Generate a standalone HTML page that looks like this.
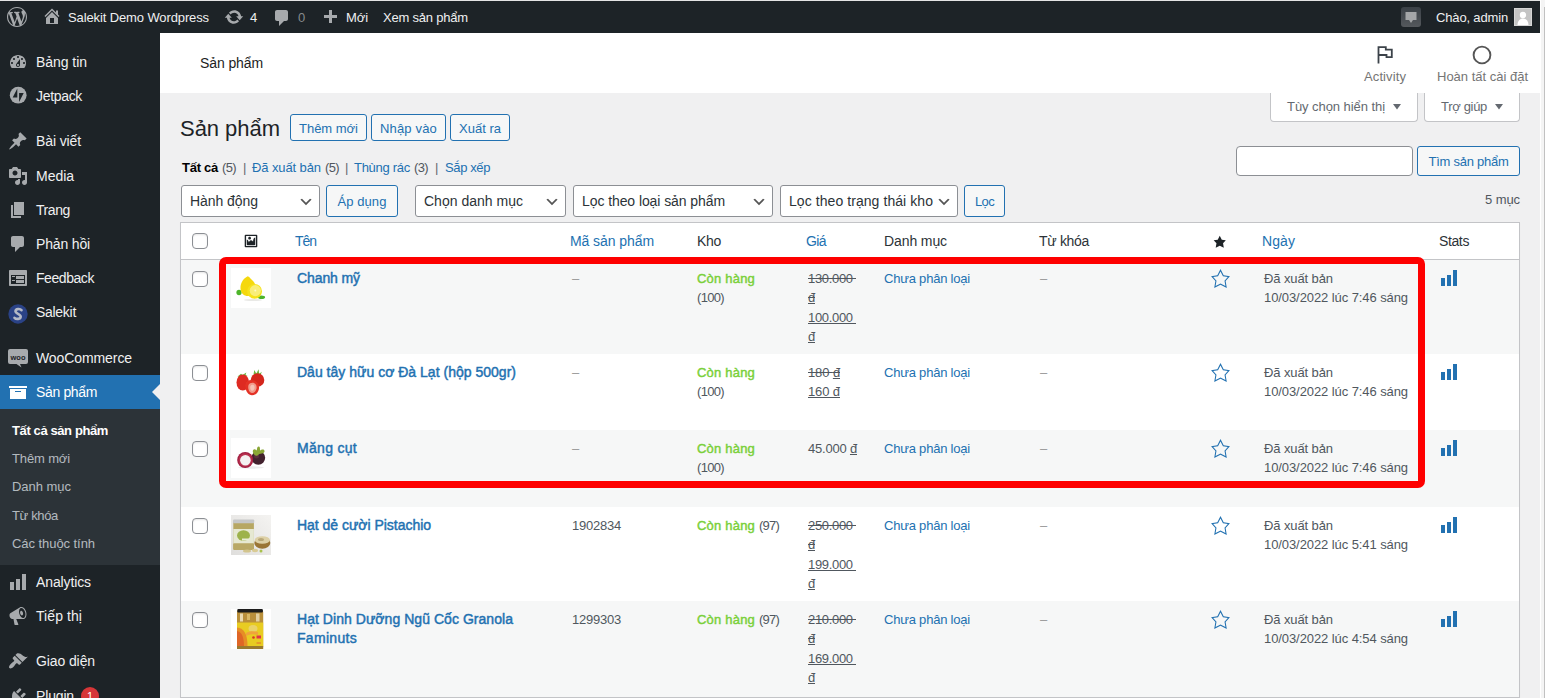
<!DOCTYPE html>
<html lang="vi"><head><meta charset="utf-8"><title>Sản phẩm ‹ Salekit Demo Wordpress — WordPress</title>
<style>
*{box-sizing:border-box;margin:0;padding:0}
html,body{width:1545px;height:698px;overflow:hidden;background:#f0f0f1}
body{font-family:"Liberation Sans",sans-serif;font-size:13px;line-height:1.4;color:#3c434a;position:relative}
.abs{position:absolute}
.t{position:absolute;white-space:nowrap;display:block;margin-top:1px}
.sel .t{margin-top:0}
.mi>.t{margin-top:0}
.tab .t{margin-top:0}
svg{display:block}
#topline{position:absolute;left:0;top:0;width:1545px;height:1px;background:#e4e4e4}
#scroll{position:absolute;left:1540px;top:0;width:5px;height:698px;background:#f4f4f4;border-left:1px solid #fff}
#scroll i{position:absolute;left:3px;top:7px;width:1px;height:691px;background:#c1c1c1}
#bar{position:absolute;left:0;top:1px;width:1540px;height:32px;background:#1d2327;color:#f0f0f1;font-size:13px;line-height:32px}
#menu{position:absolute;left:0;top:33px;width:160px;height:665px;background:#1d2327;overflow:hidden}
.mi{position:absolute;left:0;width:160px;height:34.2px;color:#f0f0f1;font-size:14px;line-height:18.2px}
.mi svg{position:absolute;left:8px;top:7px}
.mi .t{left:36px;top:8px}
.mi.cur{background:#2271b1;color:#fff}
.mi.cur:after{content:"";position:absolute;right:0;top:9px;border:8px solid transparent;border-right-color:#f0f0f1}
#sub{position:absolute;left:0;top:376px;width:160px;height:156px;background:#2c3338}
#sub .t{left:12px;color:rgba(240,246,252,.7);font-size:13px;line-height:18.2px}
#sub .t.b{color:#fff;font-weight:bold}
#whead{position:absolute;left:160px;top:33px;width:1380px;height:60px;background:#fff}
.tab{position:absolute;top:93px;height:29px;background:#fff;border:1px solid #c3c4c7;border-top:none;border-radius:0 0 4px 4px;color:#646970;font-size:13px;line-height:28px}
.btn{position:absolute;border:1px solid #2271b1;border-radius:3px;background:#f6f7f7;color:#2271b1;font-size:13px}
.sel{position:absolute;top:185px;height:32px;border:1px solid #8c8f94;border-radius:3px;background:#fff;color:#2c3338;font-size:14px;line-height:30px}
.sel svg{position:absolute;right:5px;top:8px}
#tbl{position:absolute;left:180px;top:222px;width:1340px;height:476px;border:1px solid #c3c4c7;background:#fff;box-shadow:0 1px 1px rgba(0,0,0,.04)}
#thead{position:absolute;left:0;top:0;width:1338px;height:37px;border-bottom:1px solid #c3c4c7;font-size:14px;line-height:19.6px;color:#2c3338}
#thead .t{top:8px}
.row{position:absolute;left:0;width:1338px;font-size:13px;line-height:19.5px;color:#50575e}
.row.alt{background:#f6f7f7}
.row .t{top:8px}
.cb{position:absolute;left:11px;width:16px;height:16px;border:1px solid #8c8f94;border-radius:4px;background:#fff;box-shadow:inset 0 1px 2px rgba(0,0,0,.1)}
a{color:#2271b1;text-decoration:none}
.lnk{color:#2271b1}
.name{font-size:14px;font-weight:normal;-webkit-text-stroke:.45px #2271b1;color:#2271b1}
.stock{color:#7ad03a;font-weight:normal;-webkit-text-stroke:.45px #7ad03a}
del{color:#50575e}
.u{text-decoration:underline}
#red{position:absolute;left:219px;top:257px;width:1206px;height:231px;border:7px solid #fe0000;border-radius:7px}
</style></head>
<body>
<div id="topline"></div>
<div id="scroll"><i></i></div>
<div id="bar">
<svg viewBox="0 0 20 20" width="20" height="20" style="position:absolute;left:7px;top:6px"><path fill="#a7aaad" d="M20 10c0-5.51-4.49-10-10-10C4.48 0 0 4.49 0 10c0 5.52 4.48 10 10 10 5.51 0 10-4.48 10-10zM7.78 15.37L4.37 6.22c.55-.02 1.17-.08 1.17-.08.5-.06.44-1.13-.06-1.11 0 0-1.45.11-2.37.11-.18 0-.37 0-.58-.01C4.12 2.69 6.87 1.11 10 1.11c2.33 0 4.45.87 6.05 2.34-.68-.11-1.65.39-1.65 1.58 0 .74.45 1.36.9 2.1.35.61.55 1.36.55 2.46 0 1.49-1.4 5-1.4 5l-3.03-8.37c.54-.02.82-.17.82-.17.5-.05.44-1.25-.06-1.22 0 0-1.44.12-2.38.12-.87 0-2.33-.12-2.33-.12-.5-.03-.56 1.2-.06 1.22l.92.08 1.26 3.41zM17.41 10c.24-.64.74-1.87.43-4.25.7 1.29 1.05 2.71 1.05 4.25 0 3.29-1.73 6.24-4.4 7.78.97-2.59 1.94-5.2 2.92-7.78zM6.1 18.09C3.12 16.65 1.11 13.53 1.11 10c0-1.3.23-2.48.72-3.59C3.25 10.3 4.67 14.2 6.1 18.09zm4.03-6.63l2.58 6.98c-.86.29-1.76.45-2.71.45-.79 0-1.57-.11-2.29-.33.81-2.38 1.62-4.74 2.42-7.1z"/></svg>
<svg viewBox="0 0 20 20" width="20" height="20" style="position:absolute;left:42px;top:5px"><path fill="#a7aaad" d="M16 8.5l1.53 1.53-1.06 1.06L10 4.62l-6.47 6.47-1.06-1.06L10 2.5l4 4v-2h2v4zm-6-2.46l6 5.99V18H4v-5.97zM12 17v-5H8v5h4z"/></svg>
<span class="t " style="left:68px;top:0px;letter-spacing:-0.116px;">Salekit Demo Wordpress</span>
<svg viewBox="0 0 20 20" width="20" height="20" style="position:absolute;left:224px;top:6px"><path fill="#a7aaad" d="M10.2 3.28c3.53 0 6.43 2.61 6.92 6h2.08l-3.5 4-3.5-4h2.32c-.45-1.97-2.21-3.45-4.32-3.45-1.45 0-2.73.71-3.54 1.78L4.95 5.66C6.23 4.2 8.11 3.28 10.2 3.28zm-.4 13.44c-3.52 0-6.43-2.61-6.92-6H.8l3.5-4c1.17 1.33 2.33 2.67 3.5 4H5.48c.45 1.97 2.21 3.45 4.32 3.45 1.45 0 2.73-.71 3.54-1.78l1.71 1.95c-1.28 1.46-3.15 2.38-5.25 2.38z"/></svg>
<span class="t " style="left:250px;top:0px;letter-spacing:-0.234px;">4</span>
<svg viewBox="0 0 20 20" width="20" height="20" style="position:absolute;left:272px;top:7px"><path fill="#a7aaad" d="M5 2h9c1.1 0 2 .9 2 2v7c0 1.1-.9 2-2 2h-2l-5 5v-5H5c-1.1 0-2-.9-2-2V4c0-1.1.9-2 2-2z"/></svg>
<span class="t " style="left:298px;top:0px;letter-spacing:-0.234px;color:#878a8c;">0</span>
<svg viewBox="0 0 20 20" width="20" height="20" style="position:absolute;left:320px;top:7px"><path fill="#a7aaad" d="M17 7v3h-5v5H9v-5H4V7h5V2h3v5h5z"/></svg>
<span class="t " style="left:346px;top:0px;letter-spacing:-0.083px;">Mới</span>
<span class="t " style="left:383px;top:0px;letter-spacing:-0.203px;">Xem sản phẩm</span>
<div class="abs" style="left:1401px;top:6px;width:20px;height:20px;background:linear-gradient(#3a4046,#55595d);border-radius:3px"></div>
<svg class="abs" style="left:1405px;top:11px" width="12" height="12" viewBox="0 0 12 12"><path fill="#a4a6a8" d="M.500 0h11v8H8L6 11 4 8H.500z"/></svg>
<span class="t " style="left:1436px;top:0px;letter-spacing:-0.156px;">Chào, admin</span>
<div class="abs" style="left:1514px;top:7px;width:18px;height:18px;background:#c4c4c4;border:1px solid #d6d6d6;overflow:hidden"><svg width="16" height="16" viewBox="0 0 16 16"><circle cx="8" cy="6" r="3.200" fill="#fff"/><path fill="#fff" d="M2.500 16c0-4 2.500-6.500 5.500-6.500s5.500 2.500 5.500 6.500z"/></svg></div>
</div>
<div id="menu">
<div class="mi" style="top:12.0px"><svg viewBox="0 0 20 20" width="20" height="20" style=""><path fill="#a7aaad" d="M3.76 16h12.48c1.1-1.37 1.76-3.11 1.76-5 0-4.42-3.58-8-8-8s-8 3.58-8 8c0 1.89.66 3.63 1.76 5zM10 4c.55 0 1 .45 1 1s-.45 1-1 1-1-.45-1-1 .45-1 1-1zM6 6c.55 0 1 .45 1 1s-.45 1-1 1-1-.45-1-1 .45-1 1-1zm8 0c.55 0 1 .45 1 1s-.45 1-1 1-1-.45-1-1 .45-1 1-1zm-5.37 5.55L12 7v6c0 1.1-.9 2-2 2s-2-.9-2-2c0-.57.24-1.08.63-1.45zM4 10c.55 0 1 .45 1 1s-.45 1-1 1-1-.45-1-1 .45-1 1-1zm12 0c.55 0 1 .45 1 1s-.45 1-1 1-1-.45-1-1 .45-1 1-1zm-5 3c0-.55-.45-1-1-1s-1 .45-1 1 .45 1 1 1 1-.45 1-1z"/></svg><span class="t " style="letter-spacing:-0.047px;">Bảng tin</span></div>
<div class="mi" style="top:46.2px"><svg width="20" height="20" viewBox="0 0 20 20"><circle cx="10.200" cy="9.200" r="8.400" fill="#a7aaad"/><path fill="#1d2327" d="M9.300 2.400v9H4.700zM11.100 16v-9h4.600z"/></svg><span class="t " style="letter-spacing:-0.321px;">Jetpack</span></div>
<div class="mi" style="top:91.4px"><svg viewBox="0 0 20 20" width="20" height="20" style=""><path fill="#a7aaad" d="M10.44 3.02l1.82-1.82 6.36 6.35-1.83 1.82c-1.05-.68-2.48-.57-3.41.36l-.75.75c-.92.93-1.04 2.35-.35 3.41l-1.83 1.82-2.41-2.41-2.8 2.79c-.42.42-3.38 2.71-3.8 2.29s1.86-3.39 2.28-3.81l2.79-2.79L4.1 9.36l1.83-1.82c1.05.69 2.48.57 3.4-.36l.75-.75c.93-.92 1.05-2.35.36-3.41z"/></svg><span class="t " style="letter-spacing:-0.115px;">Bài viết</span></div>
<div class="mi" style="top:125.6px"><svg viewBox="0 0 20 20" width="20" height="20" style=""><path fill="#a7aaad" d="M13 11V4c0-.55-.45-1-1-1h-1.67L9 1H5L3.67 3H2c-.55 0-1 .45-1 1v7c0 .55.45 1 1 1h10c.55 0 1-.45 1-1zM7 4.5c1.38 0 2.5 1.12 2.5 2.5S8.38 9.5 7 9.5 4.5 8.38 4.5 7 5.62 4.5 7 4.5zM14 6h5v10.5c0 1.38-1.12 2.5-2.5 2.5S14 17.88 14 16.5s1.12-2.5 2.5-2.5c.17 0 .34.02.5.05V9h-3V6zm-4 8.05V13h2v3.5c0 1.38-1.12 2.5-2.5 2.5S7 17.880 7 16.5 8.12 14 9.5 14c.17 0 .34.02.5.05z"/></svg><span class="t " style="letter-spacing:-0.028px;">Media</span></div>
<div class="mi" style="top:159.8px"><svg viewBox="0 0 20 20" width="20" height="20" style=""><path fill="#a7aaad" d="M6 15V2h10v13H6zm-1 1h8v2H3V5h2v11z"/></svg><span class="t " style="letter-spacing:-0.412px;">Trang</span></div>
<div class="mi" style="top:194.0px"><svg viewBox="0 0 20 20" width="20" height="20" style=""><path fill="#a7aaad" d="M5 2h9c1.1 0 2 .9 2 2v7c0 1.1-.9 2-2 2h-2l-5 5v-5H5c-1.1 0-2-.9-2-2V4c0-1.1.9-2 2-2z"/></svg><span class="t " style="letter-spacing:-0.160px;">Phản hồi</span></div>
<div class="mi" style="top:228.2px"><svg viewBox="0 0 20 20" width="20" height="20" style=""><path fill="#a7aaad" d="M2 2h16c.55 0 1 .45 1 1v14c0 .55-.45 1-1 1H2c-.55 0-1-.45-1-1V3c0-.55.45-1 1-1zm15 14V7H3v9h14zM4 8v1h3V8H4zm4 0v3h8V8H8zm-4 4v1h3v-1H4zm4 0v3h8v-3H8z"/></svg><span class="t " style="letter-spacing:-0.436px;">Feedback</span></div>
<div class="mi" style="top:262.4px"><svg width="20" height="20" viewBox="0 0 20 20" style="margin-top:1.500px"><circle cx="10" cy="10" r="9.700" fill="#2a4286"/><path fill="none" stroke="#b4b9c6" stroke-width="2.600" stroke-linecap="round" d="M13.500 6.200c-1.500-1.700-5.800-1.600-6 1 -.2 2.600 5.300 2.600 5.200 5.400-.1 2.700-4.600 2.900-6.200 1.200"/></svg><span class="t " style="letter-spacing:-0.290px;">Salekit</span></div>
<div class="mi" style="top:307.6px"><svg width="20" height="20" viewBox="0 0 20 20"><path fill="#a7aaad" d="M2 1h16a2 2 0 0 1 2 2v11a2 2 0 0 1-2 2h-6l1.500 3.500L8.500 16H2a2 2 0 0 1-2-2V3a2 2 0 0 1 2-2z"/><text x="10" y="11.500" font-family="Liberation Sans,sans-serif" font-size="7.500" font-weight="bold" fill="#1d2327" text-anchor="middle">woo</text></svg><span class="t " style="letter-spacing:-0.091px;">WooCommerce</span></div>
<div class="mi cur" style="top:341.8px"><svg viewBox="0 0 20 20" width="20" height="20" style=""><path fill="#fff" d="M19 4v2H1V4h18zM2 7h16v10H2V7zm11 3V9H7v1h6z"/></svg><span class="t " style="letter-spacing:-0.354px;">Sản phẩm</span></div>
<div class="mi" style="top:532.0px"><svg viewBox="0 0 20 20" width="20" height="20" style=""><path fill="#a7aaad" d="M18 18V2h-4v16h4zm-6 0V7H8v11h4zm-6 0v-8H2v8h4z"/></svg><span class="t " style="letter-spacing:-0.115px;">Analytics</span></div>
<div class="mi" style="top:566.2px"><svg viewBox="0 0 20 20" width="20" height="20" style=""><path fill="#a7aaad" d="M18.15 5.94c.46 1.62.38 3.22-.02 4.48-.42 1.28-1.26 2.18-2.3 2.48-.16.06-.26.06-.4.06-.06.02-.12.02-.18.02-.06.02-.14.02-.22.02h-6.8l2.22 5.5c.02.14-.06.26-.14.34-.08.1-.24.16-.34.16H6.95c-.1 0-.26-.06-.34-.16-.08-.08-.16-.2-.14-.34l-1-5.5H4.25l-.02-.02c-.5.06-1.08-.18-1.54-.62s-.88-1.08-1.06-1.88c-.24-.8-.2-1.56-.02-2.2.18-.62.58-1.08 1.06-1.3l.02-.02 9-5.4c.1-.06.18-.1.24-.16.06-.04.14-.08.24-.12.16-.08.28-.12.5-.18 1.04-.3 2.24.1 3.22.98s1.84 2.24 2.26 3.86zm-2.58 5.98h-.02c.4-.1.74-.34 1.04-.7.58-.7.86-1.76.86-3.04 0-.64-.1-1.3-.28-1.98-.34-1.36-1.02-2.5-1.78-3.24s-1.68-1.1-2.46-.88c-.82.22-1.4.96-1.7 2-.32 1.04-.28 2.36.06 3.72.38 1.36 1 2.5 1.8 3.24.78.74 1.62 1.1 2.48.88zm-2.54-7.08c.22-.04.42-.02.62.04.38.16.76.48 1.02 1s.42 1.2.42 1.78c0 .3-.04.56-.12.8-.18.48-.44.84-.86.94-.34.1-.8-.06-1.14-.4s-.64-.86-.78-1.5c-.18-.62-.12-1.24.02-1.72s.48-.84.82-.94z"/></svg><span class="t " style="letter-spacing:0.076px;">Tiếp thị</span></div>
<div class="mi" style="top:611.4px"><svg viewBox="0 0 20 20" width="20" height="20" style=""><path fill="#a7aaad" d="M14.48 11.06L7.41 3.99l1.5-1.5c.5-.56 2.3-.47 3.51.32 1.21.8 1.43 1.28 2.91 2.1 1.18.64 2.45 1.26 4.45.85zm-.71.71L6.7 4.7 4.93 6.47c-.39.39-.39 1.02 0 1.41l1.06 1.06c.39.39.39 1.03 0 1.42-.6.6-1.43 1.11-2.21 1.69-.35.26-.7.53-1.01.84C1.43 14.23.4 16.08 1.4 17.07c.99 1 2.84-.03 4.18-1.36.31-.31.58-.66.85-1.02.57-.78 1.08-1.61 1.69-2.21.39-.39 1.02-.39 1.41 0l1.06 1.06c.39.39 1.02.39 1.41 0z"/></svg><span class="t " style="letter-spacing:-0.104px;">Giao diện</span></div>
<div class="mi" style="top:645.6px"><svg viewBox="0 0 20 20" width="20" height="20" style=""><path fill="#a7aaad" d="M13.11 4.36L9.87 7.6 8 5.73l3.24-3.24c.35-.34 1.05-.2 1.56.32.52.51.66 1.21.31 1.55zm-8 1.77l.91-1.12 9.01 9.01-1.19.84c-.71.71-2.63 1.16-3.82 1.16H6.14L4.9 17.26c-.59.59-1.54.59-2.12 0-.59-.58-.59-1.53 0-2.12l1.24-1.24v-3.88c0-1.13.4-3.19 1.09-3.89zm7.26 3.970l3.24-3.24c.34-.35 1.04-.21 1.55.31.52.51.66 1.21.31 1.55l-3.24 3.25z"/></svg><span class="t " style="letter-spacing:-0.154px;">Plugin</span><span class="abs" style="left:81px;top:8px;width:18px;height:18px;border-radius:9px;background:#d63638;color:#fff;font-size:11px;line-height:18px;text-align:center">1</span></div>
<div id="sub" style="top:376.0px">
<span class="t b" style="top:12.0px;letter-spacing:-0.392px;">Tất cả sản phẩm</span>
<span class="t " style="top:40.2px;letter-spacing:-0.137px;">Thêm mới</span>
<span class="t " style="top:68.4px;letter-spacing:-0.031px;">Danh mục</span>
<span class="t " style="top:96.6px;letter-spacing:-0.350px;">Từ khóa</span>
<span class="t " style="top:124.8px;letter-spacing:-0.059px;">Các thuộc tính</span>
</div>
</div>
<div id="whead">
<span class="t " style="left:40px;top:19px;letter-spacing:-0.104px;font-size:14px;line-height:20px;color:#1e1e1e;">Sản phẩm</span>
<svg class="abs" style="left:1216px;top:12px" width="18" height="20" viewBox="0 0 18 20"><path fill="none" stroke="#3c434a" stroke-width="1.800" d="M2.500 18.600V2.200H9.800V4.600H15.800V12.100H10.500V10H2.500"/></svg>
<span class="t " style="left:1204px;top:34px;letter-spacing:0.104px;font-size:13px;line-height:18px;color:#757575;">Activity</span>
<svg class="abs" style="left:1312px;top:12px" width="20" height="20" viewBox="0 0 20 20"><circle cx="10" cy="10" r="8.400" fill="none" stroke="#555" stroke-width="1.900"/></svg>
<span class="t " style="left:1277px;top:34px;letter-spacing:-0.004px;font-size:13px;line-height:18px;color:#757575;">Hoàn tất cài đặt</span>
</div>
<div class="tab" style="left:1270px;width:148px"><span class="t " style="left:16px;top:0px;letter-spacing:-0.060px;">Tùy chọn hiển thị</span><svg class="abs" style="left:122px;top:11px" width="8" height="5.5" viewBox="0 0 9 7" preserveAspectRatio="none"><path fill="#646970" d="M0 0h9L4.500 7z"/></svg></div>
<div class="tab" style="left:1424px;width:96px"><span class="t " style="left:16px;top:0px;letter-spacing:-0.314px;">Trợ giúp</span><svg class="abs" style="left:70px;top:11px" width="8" height="5.5" viewBox="0 0 9 7" preserveAspectRatio="none"><path fill="#646970" d="M0 0h9L4.500 7z"/></svg></div>
<span class="t " style="left:180px;top:113px;letter-spacing:-0.037px;font-size:22px;line-height:30px;color:#1d2327;">Sản phẩm</span>
<div class="btn" style="left:290px;top:114px;width:77px;height:27px;line-height:25px;font-size:13px"><span class="t " style="left:8.0px;top:0px;letter-spacing:-0.012px;">Thêm mới</span></div>
<div class="btn" style="left:371px;top:114px;width:75px;height:27px;line-height:25px;font-size:13px"><span class="t " style="left:8.0px;top:0px;letter-spacing:0.168px;">Nhập vào</span></div>
<div class="btn" style="left:450px;top:114px;width:60px;height:27px;line-height:25px;font-size:13px"><span class="t " style="left:8.0px;top:0px;letter-spacing:0.011px;">Xuất ra</span></div>
<div class="abs" style="left:182px;top:158px;font-size:13px;line-height:18px;height:18px;color:#646970">
<span class="t " style="left:0px;top:0px;letter-spacing:-0.263px;color:#000;font-weight:bold;">Tất cả</span>
<span class="t " style="left:40px;top:0px;letter-spacing:-0.630px;color:#50575e;">(5)</span>
<span class="t " style="left:61px;top:0px;letter-spacing:-1.391px;">|</span>
<span class="t lnk" style="left:70px;top:0px;letter-spacing:-0.101px;">Đã xuất bản</span>
<span class="t " style="left:143px;top:0px;letter-spacing:-0.630px;color:#50575e;">(5)</span>
<span class="t " style="left:163px;top:0px;letter-spacing:-1.391px;">|</span>
<span class="t lnk" style="left:172px;top:0px;letter-spacing:-0.283px;">Thùng rác</span>
<span class="t " style="left:232px;top:0px;letter-spacing:-0.630px;color:#50575e;">(3)</span>
<span class="t " style="left:253px;top:0px;letter-spacing:-1.391px;">|</span>
<span class="t lnk" style="left:263px;top:0px;letter-spacing:-0.386px;">Sắp xếp</span>
</div>
<div class="abs" style="left:1236px;top:146px;width:177px;height:30px;border:1px solid #8c8f94;border-radius:4px;background:#fff"></div>
<div class="btn" style="left:1417px;top:146px;width:103px;height:30px;line-height:28px;font-size:13px"><span class="t " style="left:10.5px;top:0px;letter-spacing:-0.258px;">Tìm sản phẩm</span></div>
<div class="sel" style="left:181px;width:139px"><span class="t " style="left:8px;top:0px;letter-spacing:-0.057px;">Hành động</span><svg width="16" height="16" viewBox="0 0 20 20"><path d="M5 6l5 5 5-5 2 1-7 7-7-7 2-1z" fill="#555"/></svg></div>
<div class="btn" style="left:326px;top:185px;width:72px;height:32px;line-height:30px;font-size:13px"><span class="t " style="left:10.5px;top:0px;letter-spacing:0.080px;">Áp dụng</span></div>
<div class="sel" style="left:415px;width:151px"><span class="t " style="left:8px;top:0px;letter-spacing:0.012px;">Chọn danh mục</span><svg width="16" height="16" viewBox="0 0 20 20"><path d="M5 6l5 5 5-5 2 1-7 7-7-7 2-1z" fill="#555"/></svg></div>
<div class="sel" style="left:573px;width:200px"><span class="t " style="left:8px;top:0px;letter-spacing:-0.080px;">Lọc theo loại sản phẩm</span><svg width="16" height="16" viewBox="0 0 20 20"><path d="M5 6l5 5 5-5 2 1-7 7-7-7 2-1z" fill="#555"/></svg></div>
<div class="sel" style="left:780px;width:178px"><span class="t " style="left:8px;top:0px;letter-spacing:0.068px;">Lọc theo trạng thái kho</span><svg width="16" height="16" viewBox="0 0 20 20"><path d="M5 6l5 5 5-5 2 1-7 7-7-7 2-1z" fill="#555"/></svg></div>
<div class="btn" style="left:964px;top:185px;width:41px;height:32px;line-height:30px;font-size:13px"><span class="t " style="left:10.0px;top:0px;letter-spacing:-0.656px;">Lọc</span></div>
<span class="t " style="left:1485px;top:190px;letter-spacing:-0.081px;font-size:13px;line-height:18px;color:#50575e;">5 mục</span>
<div id="tbl">
<div id="thead">
<span class="cb" style="top:10px"></span>
<svg viewBox="0 0 20 20" width="14" height="14" style="position:absolute;left:63px;top:11px"><path fill="#1d2327" d="M2.250 1h15.5c.69 0 1.25.56 1.25 1.25v15.5c0 .69-.56 1.25-1.25 1.25H2.25C1.56 19 1 18.44 1 17.75V2.25C1 1.56 1.56 1 2.25 1zM17 17V3H3v14h14zM10 6c0-1.100-.9-2-2-2s-2 .9-2 2 .9 2 2 2 2-.9 2-2zm3 5s0-6 3-6v10c0 .55-.45 1-1 1H5c-.55 0-1-.45-1-1V8c2 0 3 4 3 4s1-3 3-3 3 2 3 2z"/></svg>
<span class="t lnk" style="left:114px;letter-spacing:-1.042px;">Tên</span>
<span class="t lnk" style="left:389px;letter-spacing:-0.075px;">Mã sản phẩm</span>
<span class="t " style="left:516px;letter-spacing:-0.307px;">Kho</span>
<span class="t lnk" style="left:625px;letter-spacing:-0.599px;">Giá</span>
<span class="t " style="left:703px;letter-spacing:-0.102px;">Danh mục</span>
<span class="t " style="left:858px;letter-spacing:-0.310px;">Từ khóa</span>
<svg viewBox="0 0 20 20" width="13.5" height="13.5" style="position:absolute;left:1032px;top:12.4px"><path fill="#1d2327" d="M10 1l3 6 6 .75-4.12 4.62L16 19l-6-3-6 3 1.13-6.63L1 7.75 7 7z"/></svg>
<span class="t lnk" style="left:1081px;letter-spacing:0.078px;">Ngày</span>
<span class="t " style="left:1258px;letter-spacing:-0.381px;">Stats</span>
</div>
<div class="row alt" style="top:37px;height:94px">
<span class="cb" style="top:11px"></span>
<div class="abs" style="left:50px;top:8px;width:40px;height:40px"><svg width="40" height="40" viewBox="0 0 40 40"><defs><filter id="bl" x="-10%" y="-10%" width="120%" height="120%"><feGaussianBlur stdDeviation="0.45"/></filter></defs><rect width="40" height="40" fill="#fff"/><g filter="url(#bl)"><ellipse cx="8" cy="24.500" rx="2.600" ry="2.800" fill="#4db52c"/><ellipse cx="30.500" cy="29.300" rx="3.600" ry="1.800" fill="#4db52c"/><path d="M16.800 8.200c-3.500 1.500-7.500 6-7.300 12 .2 5 3.500 7.800 7.500 7.800 5-.5 7.500-4.500 7.500-9.500 0-3.500-2.500-5.500-4.500-7.500-1-1.200-2-2.500-3.200-2.800z" fill="#f5d80e"/><circle cx="23.600" cy="23.300" r="7.400" fill="#f6e21c"/><circle cx="24.300" cy="22.600" r="5.600" fill="#f9ee78"/><circle cx="24.300" cy="22.600" r="1" fill="#fdf8c8"/><ellipse cx="22" cy="32" rx="9" ry="1" fill="#e9e9e6"/></g></svg></div>
<span class="t name" style="left:116px;top:8px;letter-spacing:-0.102px;">Chanh mỹ</span>
<span class="t " style="left:391px;letter-spacing:-0.234px;color:#999;">–</span>
<span class="t stock" style="left:516px;letter-spacing:0.201px;">Còn hàng</span>
<span class="t " style="left:516px;top:27px;letter-spacing:-0.672px;">(100)</span>
<span class="t " style="left:627px;letter-spacing:-0.326px;"><del>130.000&nbsp;</del></span>
<span class="t " style="left:627px;top:27px;letter-spacing:-0.234px;"><del><span class="u">đ</span></del></span>
<span class="t " style="left:627px;top:47px;letter-spacing:-0.326px;"><span class="u">100.000&nbsp;</span></span>
<span class="t " style="left:627px;top:66px;letter-spacing:-0.234px;"><span class="u">đ</span></span>
<span class="t lnk" style="left:703px;letter-spacing:-0.210px;">Chưa phân loại</span>
<span class="t " style="left:859px;letter-spacing:-0.234px;color:#999;">–</span>
<svg viewBox="0 0 20 20" width="21" height="21" style="position:absolute;left:1028.5px;top:7.5px"><path fill="#2271b1" d="M10 1L7 7l-6 .75 4.13 4.62L4 19l6-3 6 3-1.12-6.63L19 7.75 13 7zm0 2.240l2.34 4.69 4.65.58-3.18 3.56.87 5.15L10 14.88l-4.68 2.34.87-5.15-3.18-3.56 4.65-.58z"/></svg>
<span class="t " style="left:1083px;letter-spacing:-0.101px;">Đã xuất bản</span>
<span class="t " style="left:1083px;top:27px;letter-spacing:-0.084px;">10/03/2022 lúc 7:46 sáng</span>
<svg viewBox="0 0 20 20" width="20" height="20" style="position:absolute;left:1258px;top:8px"><path fill="#2271b1" d="M18 18V2h-4v16h4zm-6 0V7H8v11h4zm-6 0v-8H2v8h4z"/></svg>
</div>
<div class="row" style="top:131px;height:76px">
<span class="cb" style="top:11px"></span>
<div class="abs" style="left:50px;top:8px;width:40px;height:40px"><svg width="40" height="40" viewBox="0 0 40 40"><defs><filter id="bl" x="-10%" y="-10%" width="120%" height="120%"><feGaussianBlur stdDeviation="0.45"/></filter></defs><rect width="40" height="40" fill="#fff"/><g filter="url(#bl)"><path d="M22.500 12.500l.8-4.500 2 3.500 2.300-4.200.6 4.400 2.600-2-1.400 4z" fill="#6db543"/><path d="M6.500 14.500l3.500-2.800 1.500 1.200 3.800-2.400-.8 3 2-.3-2.500 2.300z" fill="#6db543"/><ellipse cx="26.500" cy="18" rx="6.800" ry="6.800" fill="#d4261c"/><ellipse cx="11.800" cy="20.500" rx="6.300" ry="8" fill="#de2a20"/><path d="M14.500 22c1-3.500 5-5 8.500-3.500 3.500 1.200 5.500 4.500 5 8-.6 4-3.500 6.800-7 6.800-4 0-7.500-5.300-6.500-11.300z" fill="#e43327"/><path d="M17.500 23c1-2 3.500-2.800 5.500-2 2 1 3 3 2.500 5.500-.5 2.500-2.300 4.500-4.500 4.500-2.600 0-4.500-4-3.500-8z" fill="#f19a8b"/><path d="M19.500 24c.8-1.200 2-1.500 3-1 1 .6 1.300 2 1 3.300-.4 1.500-1.200 2.500-2.300 2.500-1.400 0-2.500-2.500-1.700-4.800z" fill="#f6c3b6"/></g></svg></div>
<span class="t name" style="left:116px;top:8px;letter-spacing:0.013px;">Dâu tây hữu cơ Đà Lạt (hộp 500gr)</span>
<span class="t " style="left:391px;letter-spacing:-0.234px;color:#999;">–</span>
<span class="t stock" style="left:516px;letter-spacing:0.201px;">Còn hàng</span>
<span class="t " style="left:516px;top:27px;letter-spacing:-0.672px;">(100)</span>
<span class="t " style="left:627px;letter-spacing:-0.109px;"><del>180&nbsp;<span class="u">đ</span></del></span>
<span class="t " style="left:627px;top:27px;letter-spacing:-0.109px;"><span class="u">160&nbsp;đ</span></span>
<span class="t lnk" style="left:703px;letter-spacing:-0.210px;">Chưa phân loại</span>
<span class="t " style="left:859px;letter-spacing:-0.234px;color:#999;">–</span>
<svg viewBox="0 0 20 20" width="21" height="21" style="position:absolute;left:1028.5px;top:7.5px"><path fill="#2271b1" d="M10 1L7 7l-6 .75 4.13 4.62L4 19l6-3 6 3-1.12-6.63L19 7.75 13 7zm0 2.240l2.34 4.69 4.65.58-3.18 3.56.87 5.15L10 14.88l-4.68 2.34.87-5.15-3.18-3.56 4.65-.58z"/></svg>
<span class="t " style="left:1083px;letter-spacing:-0.101px;">Đã xuất bản</span>
<span class="t " style="left:1083px;top:27px;letter-spacing:-0.084px;">10/03/2022 lúc 7:46 sáng</span>
<svg viewBox="0 0 20 20" width="20" height="20" style="position:absolute;left:1258px;top:8px"><path fill="#2271b1" d="M18 18V2h-4v16h4zm-6 0V7H8v11h4zm-6 0v-8H2v8h4z"/></svg>
</div>
<div class="row alt" style="top:207px;height:77px">
<span class="cb" style="top:11px"></span>
<div class="abs" style="left:50px;top:8px;width:40px;height:40px"><svg width="40" height="40" viewBox="0 0 40 40"><defs><filter id="bl" x="-10%" y="-10%" width="120%" height="120%"><feGaussianBlur stdDeviation="0.45"/></filter></defs><rect width="40" height="40" fill="#fff"/><g filter="url(#bl)"><ellipse cx="20" cy="29.500" rx="13" ry="1.200" fill="#ececec"/><circle cx="27.300" cy="19.800" r="6.900" fill="#43212d"/><circle cx="25.500" cy="18" r="2.500" fill="#5a2f3c"/><path d="M21.800 13.500c0-2 1.300-2.600 2.600-2l1.300 1 .6-3c.8-1.400 2.300-1.200 2.600.2l.2 2.800c1-1 3-1.600 4-.6 1 1.200.2 2.800-1.200 3.300l-3.600.8-2.200 1.800c-2 .3-4.100-1.800-4.300-4.300z" fill="#8aa636"/><circle cx="14.200" cy="22" r="8" fill="#a21e40"/><circle cx="14.200" cy="22" r="6.800" fill="#b8324f"/><circle cx="14.400" cy="22.200" r="5.300" fill="#f4f1f1"/></g></svg></div>
<span class="t name" style="left:116px;top:8px;letter-spacing:0.301px;">Măng cụt</span>
<span class="t " style="left:391px;letter-spacing:-0.234px;color:#999;">–</span>
<span class="t stock" style="left:516px;letter-spacing:0.201px;">Còn hàng</span>
<span class="t " style="left:516px;top:27px;letter-spacing:-0.672px;">(100)</span>
<span class="t " style="left:627px;letter-spacing:-0.201px;">45.000 <span class="u">đ</span></span>
<span class="t lnk" style="left:703px;letter-spacing:-0.210px;">Chưa phân loại</span>
<span class="t " style="left:859px;letter-spacing:-0.234px;color:#999;">–</span>
<svg viewBox="0 0 20 20" width="21" height="21" style="position:absolute;left:1028.5px;top:7.5px"><path fill="#2271b1" d="M10 1L7 7l-6 .75 4.13 4.62L4 19l6-3 6 3-1.12-6.63L19 7.75 13 7zm0 2.240l2.34 4.69 4.65.58-3.18 3.56.87 5.15L10 14.88l-4.68 2.34.87-5.15-3.18-3.56 4.65-.58z"/></svg>
<span class="t " style="left:1083px;letter-spacing:-0.101px;">Đã xuất bản</span>
<span class="t " style="left:1083px;top:27px;letter-spacing:-0.084px;">10/03/2022 lúc 7:46 sáng</span>
<svg viewBox="0 0 20 20" width="20" height="20" style="position:absolute;left:1258px;top:8px"><path fill="#2271b1" d="M18 18V2h-4v16h4zm-6 0V7H8v11h4zm-6 0v-8H2v8h4z"/></svg>
</div>
<div class="row" style="top:284px;height:94px">
<span class="cb" style="top:11px"></span>
<div class="abs" style="left:50px;top:8px;width:40px;height:40px"><svg width="40" height="40" viewBox="0 0 40 40"><defs><filter id="bl" x="-10%" y="-10%" width="120%" height="120%"><feGaussianBlur stdDeviation="0.45"/></filter></defs><linearGradient id="pg" x1="0" y1="1" x2="1" y2="0"><stop offset="0" stop-color="#dfdedc"/><stop offset="1" stop-color="#f4f3f1"/></linearGradient><rect width="40" height="40" fill="url(#pg)"/><g filter="url(#bl)"><rect x="2.300" y="6" width="20.600" height="29" rx="1.500" fill="#b7a764"/><rect x="2" y="4.600" width="21.200" height="3.600" rx="1" fill="#c6c7c8"/><rect x="2.300" y="14" width="20.600" height="14.500" fill="#e6e8d2"/><ellipse cx="12.500" cy="20.500" rx="6.500" ry="5.200" fill="#9db24b"/><rect x="11" y="23.500" width="7" height="2" fill="#e8ecd6"/><rect x="2.300" y="28.500" width="20.600" height="6.500" rx="1.200" fill="#b9a866"/><ellipse cx="31.300" cy="28" rx="8" ry="5.800" fill="#9a7535"/><ellipse cx="31.300" cy="25" rx="7.600" ry="3.800" fill="#ddd0a6"/><ellipse cx="30" cy="24.500" rx="3" ry="1.600" fill="#b9a878"/><ellipse cx="24" cy="35.500" rx="3" ry="1.700" fill="#d9cb94"/><circle cx="30" cy="36" r="1.500" fill="#a9c14e"/><ellipse cx="16" cy="36" rx="4" ry="1.500" fill="#d2c48d"/></g></svg></div>
<span class="t name" style="left:116px;top:8px;letter-spacing:-0.024px;">Hạt dẻ cười Pistachio</span>
<span class="t " style="left:391px;letter-spacing:-0.232px;">1902834</span>
<span class="t stock" style="left:516px;letter-spacing:0.201px;">Còn hàng</span>
<span class="t " style="left:578px;letter-spacing:-0.781px;">(97)</span>
<span class="t " style="left:627px;letter-spacing:-0.326px;"><del>250.000&nbsp;</del></span>
<span class="t " style="left:627px;top:27px;letter-spacing:-0.234px;"><del><span class="u">đ</span></del></span>
<span class="t " style="left:627px;top:47px;letter-spacing:-0.326px;"><span class="u">199.000&nbsp;</span></span>
<span class="t " style="left:627px;top:66px;letter-spacing:-0.234px;"><span class="u">đ</span></span>
<span class="t lnk" style="left:703px;letter-spacing:-0.210px;">Chưa phân loại</span>
<span class="t " style="left:859px;letter-spacing:-0.234px;color:#999;">–</span>
<svg viewBox="0 0 20 20" width="21" height="21" style="position:absolute;left:1028.5px;top:7.5px"><path fill="#2271b1" d="M10 1L7 7l-6 .75 4.13 4.62L4 19l6-3 6 3-1.12-6.63L19 7.75 13 7zm0 2.240l2.34 4.69 4.65.58-3.18 3.56.87 5.15L10 14.88l-4.68 2.34.87-5.15-3.18-3.56 4.65-.58z"/></svg>
<span class="t " style="left:1083px;letter-spacing:-0.101px;">Đã xuất bản</span>
<span class="t " style="left:1083px;top:27px;letter-spacing:-0.084px;">10/03/2022 lúc 5:41 sáng</span>
<svg viewBox="0 0 20 20" width="20" height="20" style="position:absolute;left:1258px;top:8px"><path fill="#2271b1" d="M18 18V2h-4v16h4zm-6 0V7H8v11h4zm-6 0v-8H2v8h4z"/></svg>
</div>
<div class="row alt" style="top:378px;height:96px">
<span class="cb" style="top:11px"></span>
<div class="abs" style="left:50px;top:8px;width:40px;height:40px"><svg width="40" height="40" viewBox="0 0 40 40"><defs><filter id="bl" x="-10%" y="-10%" width="120%" height="120%"><feGaussianBlur stdDeviation="0.45"/></filter></defs><rect width="40" height="40" fill="#fff"/><g filter="url(#bl)"><rect x="6" y="1" width="26.200" height="39" rx="2" fill="#b98f3a"/><rect x="6.300" y="0" width="25.600" height="3.600" rx="1" fill="#1f1d1c"/><rect x="9" y="4.500" width="3" height="8" fill="#ead9b0"/><rect x="25" y="4.500" width="3.500" height="8" fill="#e2cfa0"/><rect x="16" y="5" width="3" height="6" fill="#d9b866"/><rect x="6" y="13.500" width="26.200" height="23.500" fill="#e8cc20"/><path d="M6 18.500c6.500.5 10.500 6 10.500 18.500H6z" fill="#e5732a" opacity=".7"/><path d="M6 22c4 .5 7 5 7 15H6z" fill="#d8452a" opacity=".55"/><ellipse cx="22" cy="19.500" rx="4.500" ry="3.500" fill="#e9d36a"/><path d="M15 24c3-2 8-2.500 12-1v3c-4-1-8-1-12 1z" fill="#f0a43a"/><rect x="25.500" y="26.500" width="4.500" height="3" fill="#e0364a"/><circle cx="22.500" cy="28.500" r="1.300" fill="#d8342a"/><rect x="25.500" y="33" width="4.500" height="2" fill="#e79a2c"/><rect x="6" y="37" width="26.200" height="3" fill="#9a7a2e"/></g></svg></div>
<span class="t name" style="left:116px;top:8px;letter-spacing:0.045px;">Hạt Dinh Dưỡng Ngũ Cốc Granola</span>
<span class="t name" style="left:116px;top:27px;letter-spacing:0.303px;">Faminuts</span>
<span class="t " style="left:391px;letter-spacing:-0.232px;">1299303</span>
<span class="t stock" style="left:516px;letter-spacing:0.201px;">Còn hàng</span>
<span class="t " style="left:578px;letter-spacing:-0.781px;">(97)</span>
<span class="t " style="left:627px;letter-spacing:-0.326px;"><del>210.000&nbsp;</del></span>
<span class="t " style="left:627px;top:27px;letter-spacing:-0.234px;"><del><span class="u">đ</span></del></span>
<span class="t " style="left:627px;top:47px;letter-spacing:-0.326px;"><span class="u">169.000&nbsp;</span></span>
<span class="t " style="left:627px;top:66px;letter-spacing:-0.234px;"><span class="u">đ</span></span>
<span class="t lnk" style="left:703px;letter-spacing:-0.210px;">Chưa phân loại</span>
<span class="t " style="left:859px;letter-spacing:-0.234px;color:#999;">–</span>
<svg viewBox="0 0 20 20" width="21" height="21" style="position:absolute;left:1028.5px;top:7.5px"><path fill="#2271b1" d="M10 1L7 7l-6 .75 4.13 4.62L4 19l6-3 6 3-1.12-6.63L19 7.75 13 7zm0 2.240l2.34 4.69 4.65.58-3.18 3.56.87 5.15L10 14.88l-4.68 2.34.87-5.15-3.18-3.56 4.65-.58z"/></svg>
<span class="t " style="left:1083px;letter-spacing:-0.101px;">Đã xuất bản</span>
<span class="t " style="left:1083px;top:27px;letter-spacing:-0.084px;">10/03/2022 lúc 4:54 sáng</span>
<svg viewBox="0 0 20 20" width="20" height="20" style="position:absolute;left:1258px;top:8px"><path fill="#2271b1" d="M18 18V2h-4v16h4zm-6 0V7H8v11h4zm-6 0v-8H2v8h4z"/></svg>
</div>
</div>
<div id="red"></div>
</body></html>
